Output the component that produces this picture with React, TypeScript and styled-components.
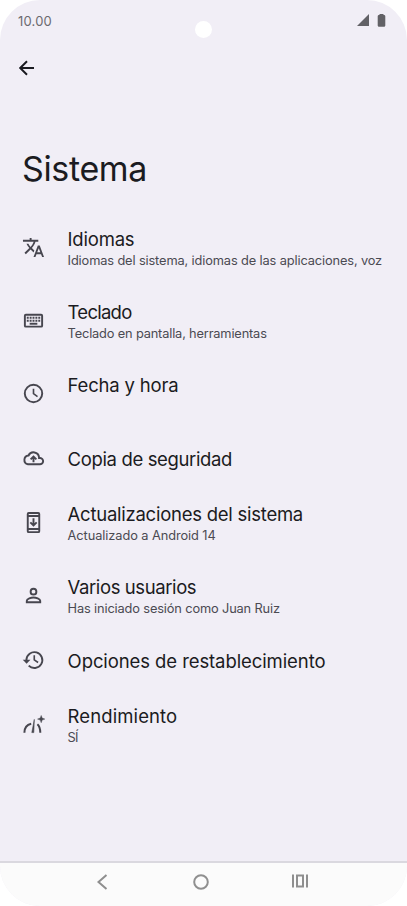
import React from "react";
import styled, { createGlobalStyle } from "styled-components";

const GlobalStyle = createGlobalStyle`
  *, *::before, *::after { box-sizing: border-box; }
  html, body { margin: 0; background: #ffffff; }
`;

const Phone = styled.div`
  display: flex;
  flex-direction: column;
  position: relative;
  width: 407px;
  height: 906px;
  overflow: hidden;
  border-radius: 40px;
  background: #f1eef6;
  color: #1b1b21;
  font-family: Inter, "Open Sans", sans-serif;
`;

const StatusBar = styled.header`
  display: flex;
  align-items: center;
  justify-content: space-between;
  height: 42px;
  padding: 0 21px 0 18px;
  flex: none;
`;

const Time = styled.span<{ $tracking: number }>`
  font-size: 13px;
  line-height: 16px;
  letter-spacing: ${(p) => p.$tracking}px;
  color: #6c6a70;
`;

const StatusIcons = styled.div`
  display: flex;
  align-items: center;
  gap: 8px;
  margin-top: -2px;
  color: #626166;
`;

const Camera = styled.div`
  position: absolute;
  top: 21px;
  left: 195px;
  width: 17px;
  height: 17px;
  border-radius: 50%;
  background: #ffffff;
`;

const BackButton = styled.button`
  display: flex;
  width: 24px;
  height: 24px;
  margin: 14px 0 0 15px;
  padding: 0;
  border: 0;
  background: none;
  color: #1b1b21;
  flex: none;
`;

const PageTitle = styled.h1<{ $tracking: number }>`
  height: 44px;
  margin: 67px 0 20px 22px;
  font-size: 34px;
  font-weight: 400;
  line-height: 44px;
  letter-spacing: ${(p) => p.$tracking}px;
  flex: none;
`;

const SettingsList = styled.ul`
  flex: 1;
  margin: 0;
  padding: 0;
  list-style: none;
`;

const Row = styled.li<{ $tall: boolean }>`
  display: flex;
  height: ${(p) => (p.$tall ? 73.2 : 55.6)}px;
`;

const IconSlot = styled.div`
  display: flex;
  align-items: center;
  justify-content: center;
  width: 67px;
  margin-right: 0.6px;
  color: #47464f;
  flex: none;
`;

const Labels = styled.div`
  display: flex;
  flex-direction: column;
  padding-top: 16px;
  white-space: nowrap;
`;

const Name = styled.span<{ $tracking: number }>`
  height: 25px;
  font-size: 18.5px;
  line-height: 24px;
  letter-spacing: ${(p) => p.$tracking}px;
`;

const Summary = styled.span<{ $tracking: number }>`
  font-size: 12.8px;
  line-height: 18px;
  letter-spacing: ${(p) => p.$tracking}px;
  color: #4b4a52;
`;

const NavBar = styled.nav`
  display: flex;
  justify-content: space-between;
  height: 45px;
  padding: 9.5px 98px 0 92.5px;
  border-top: 2px solid #dad8df;
  background: #fbfbfb;
  color: #8f8f8f;
  flex: none;
`;

const Glyph = styled.svg`
  display: block;
  fill: none;
  stroke: currentColor;
  stroke-width: 2;
`;

const SolidGlyph = styled(Glyph)`
  fill: currentColor;
  stroke: none;
`;

const TranslateIcon = () => (
  <SolidGlyph width="23" height="23" viewBox="0 0 24 24">
    <path d="M12.87 15.07l-2.54-2.51.03-.03c1.74-1.94 2.98-4.17 3.71-6.53H17V4h-7V2H8v2H1v1.99h11.17C11.5 7.92 10.44 9.75 9 11.35 8.07 10.32 7.3 9.19 6.69 8h-2c.73 1.63 1.73 3.17 2.98 4.56l-5.09 5.02L4 19l5-5 3.11 3.11.76-2.04zM18.5 10h-2L12 22h2l1.12-3h4.75L21 22h2l-4.5-12zm-2.62 7l1.62-4.33L19.12 17h-3.24z" />
  </SolidGlyph>
);

const KeyboardIcon = () => (
  <Glyph width="23" height="23" viewBox="0 0 24 24">
    <rect x="3" y="6" width="18" height="12.4" rx="1" />
    <path d="M5 9.2h14M5 12.2h14" strokeDasharray="2 1" />
    <path d="M8 15.4h8" />
  </Glyph>
);

const ClockIcon = () => (
  <Glyph width="23" height="23" viewBox="0 0 24 24">
    <circle cx="12" cy="12" r="9.1" />
    <path d="M12 7v5.2l4.2 3" strokeWidth="1.7" />
  </Glyph>
);

const BackupIcon = () => (
  <Glyph width="23" height="23" viewBox="0 0 24 24">
    <path d="M6.2 18h12.3a3.3 3.3 0 0 0 .5-6.6h-1.2v-.6A5.8 5.8 0 0 0 6.8 8.9 4.6 4.6 0 0 0 6.2 18z" />
    <path d="M12 15.9v-5M9 12.9l3-3 3 3" />
  </Glyph>
);

const UpdateIcon = () => (
  <Glyph width="23" height="23" viewBox="0 0 24 24">
    <rect x="6" y="2" width="12" height="20" rx="1" />
    <path d="M6 5.2h12M6 18.8h12M12 7.5v7M8.7 11.8 12 15.1l3.3-3.3" />
  </Glyph>
);

const PersonIcon = () => (
  <Glyph width="23" height="23" viewBox="0 0 24 24">
    <circle cx="12" cy="8" r="3" />
    <path d="M5 19v-1.6c0-2 4.6-3.3 7-3.3s7 1.3 7 3.3V19z" />
  </Glyph>
);

const HistoryIcon = () => (
  <Glyph width="23" height="23" viewBox="0 0 24 24">
    <path d="M4.6 12v-.6a8.3 8.3 0 1 1 2.4 6" />
    <path d="M.8 11.3h8l-4 4z" fill="currentColor" stroke="none" />
    <path d="M12.8 6.6v4.8l4 2.7" strokeWidth="1.7" />
  </Glyph>
);

const PerformanceIcon = () => (
  <Glyph width="24" height="23" viewBox="0 0 24 23">
    <path d="M2.4 19.7c0-4.8 2.2-8 6.8-9M15.4 11.3c2 1.7 2.8 4.2 2.9 8.4" />
    <path d="M12.3 6.4 9.8 19.6h2z" fill="currentColor" strokeWidth=".6" />
    <path d="M19.2 2.4l1 2.7 2.7 1-2.7 1-1 2.7-1-2.7-2.7-1 2.7-1z" fill="currentColor" strokeWidth=".4" />
  </Glyph>
);

interface Setting {
  name: string;
  tracking: number;
  summary?: string;
  summaryTracking?: number;
  tall?: boolean;
  Icon: React.FC;
}

const settings: Setting[] = [
  { name: "Idiomas", tracking: -0.2, summary: "Idiomas del sistema, idiomas de las aplicaciones, voz", summaryTracking: -0.125, tall: true, Icon: TranslateIcon },
  { name: "Teclado", tracking: -0.75, summary: "Teclado en pantalla, herramientas", summaryTracking: -0.16, tall: true, Icon: KeyboardIcon },
  { name: "Fecha y hora", tracking: -0.18, tall: true, Icon: ClockIcon },
  { name: "Copia de seguridad", tracking: -0.36, Icon: BackupIcon },
  { name: "Actualizaciones del sistema", tracking: -0.25, summary: "Actualizado a Android 14", summaryTracking: -0.08, tall: true, Icon: UpdateIcon },
  { name: "Varios usuarios", tracking: -0.4, summary: "Has iniciado sesión como Juan Ruiz", summaryTracking: -0.14, tall: true, Icon: PersonIcon },
  { name: "Opciones de restablecimiento", tracking: -0.09, Icon: HistoryIcon },
  { name: "Rendimiento", tracking: 0.1, summary: "SÍ", summaryTracking: -0.7, tall: true, Icon: PerformanceIcon },
];

export default function App() {
  return (
    <>
      <GlobalStyle />
      <Phone>
        <StatusBar>
          <Time $tracking={0.2}>10.00</Time>
          <StatusIcons>
            <SolidGlyph width="12" height="12" viewBox="0 0 12 12">
              <path d="M12 0v12H0z" />
            </SolidGlyph>
            <SolidGlyph width="9" height="13" viewBox="0 0 9 13">
              <path d="M2.5 1V0h4v1H7a1.3 1.3 0 0 1 1.3 1.3v9.2A1.3 1.3 0 0 1 7 12.8H2a1.3 1.3 0 0 1-1.3-1.3V2.3A1.3 1.3 0 0 1 2 1z" />
            </SolidGlyph>
          </StatusIcons>
        </StatusBar>
        <Camera />
        <BackButton aria-label="Atrás">
          <Glyph width="24" height="24" viewBox="0 0 24 24">
            <path d="M19 12H5.5M12 5.2 5.2 12l6.8 6.8" />
          </Glyph>
        </BackButton>
        <PageTitle $tracking={-0.35}>Sistema</PageTitle>
        <SettingsList>
          {settings.map(({ name, tracking, summary, summaryTracking = 0, tall = false, Icon }) => (
            <Row key={name} $tall={tall}>
              <IconSlot>
                <Icon />
              </IconSlot>
              <Labels>
                <Name $tracking={tracking}>{name}</Name>
                {summary && <Summary $tracking={summaryTracking}>{summary}</Summary>}
              </Labels>
            </Row>
          ))}
        </SettingsList>
        <NavBar>
          <Glyph width="18" height="18" viewBox="0 0 18 18">
            <path d="M13.5 2 5.5 9l8 7" />
          </Glyph>
          <Glyph width="18" height="18" viewBox="0 0 18 18">
            <circle cx="9" cy="9" r="6.8" />
          </Glyph>
          <Glyph width="18" height="18" viewBox="0 0 18 18">
            <path d="M2 1.5v13M16 1.5v13M6 2.5h6v11H6z" />
          </Glyph>
        </NavBar>
      </Phone>
    </>
  );
}
